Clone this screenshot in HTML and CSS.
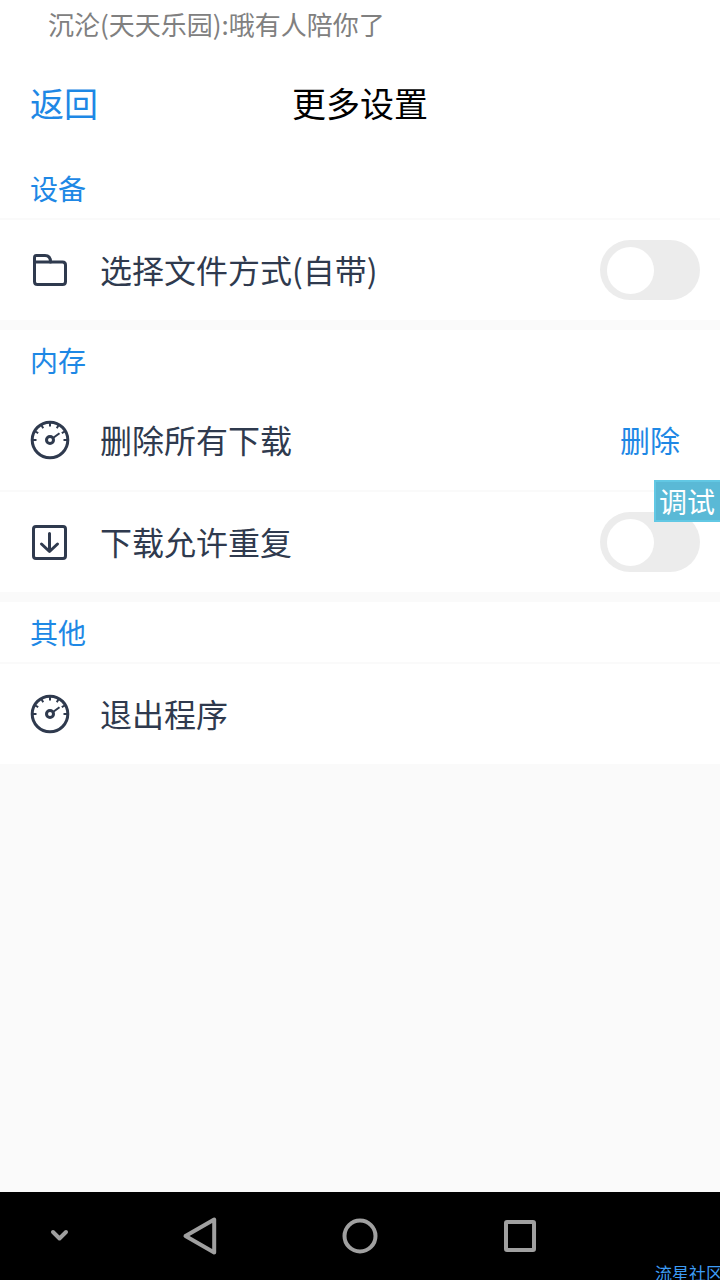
FILE: index.html
```html
<!DOCTYPE html>
<html lang="zh-CN">
<head>
  <meta charset="UTF-8" />
  <meta name="viewport" content="width=device-width, initial-scale=1.0"/>
  <title>更多设置</title>
  <link rel="stylesheet" href="styles.css">
</head>
<body>
  <div class="status-bar">沉沦(天天乐园):哦有人陪你了</div>

  <header class="header">
    <a class="back">返回</a>
    <h1>更多设置</h1>
  </header>

  <main>
    <section class="group">
      <h2 class="line">设备</h2>
      <div class="row">
        <svg class="icon" viewBox="0 0 40 40">
          <path d="M4.500 14.500V8Q4.500 5.500 6 5.500H15Q20.500 5.500 20.500 12"/>
          <path d="M4.500 12H32.500Q35.500 12 35.500 15V31.500Q35.500 34.500 32.500 34.500H7.500Q4.500 34.500 4.500 31.500Z"/>
        </svg>
        <span class="label">选择文件方式(自带)</span>
        <span class="switch"></span>
      </div>
    </section>

    <section class="group">
      <h2>内存</h2>
      <div class="row">
        <svg class="icon" viewBox="0 0 40 40">
          <circle cx="20" cy="20" r="17.800"/>
          <circle cx="20" cy="20" r="3.500"/>
          <path class="thin" d="M23 18L29.500 13.200M20 3V6.500M3 20H6.500M33.500 20H37M5.300 11.500L8.200 13.200M34.700 11.500L31.800 13.200M11.500 5.300L13.200 8.200M28.500 5.300L26.800 8.200"/>
        </svg>
        <span class="label">删除所有下载</span>
        <a class="action">删除</a>
      </div>
      <div class="row line-top">
        <svg class="icon" viewBox="0 0 40 40">
          <rect x="3.500" y="4.500" width="32" height="32" rx="2.500"/>
          <path d="M19.500 11.500V29M11.500 22L19.500 29.500L27.500 22"/>
        </svg>
        <span class="label">下载允许重复</span>
        <span class="switch"></span>
        <span class="debug">调试</span>
      </div>
    </section>

    <section class="group">
      <h2 class="line">其他</h2>
      <div class="row">
        <svg class="icon" viewBox="0 0 40 40">
          <circle cx="20" cy="20" r="17.800"/>
          <circle cx="20" cy="20" r="3.500"/>
          <path class="thin" d="M23 18L29.500 13.200M20 3V6.500M3 20H6.500M33.500 20H37M5.300 11.500L8.200 13.200M34.700 11.500L31.800 13.200M11.500 5.300L13.200 8.200M28.500 5.300L26.800 8.200"/>
        </svg>
        <span class="label">退出程序</span>
      </div>
    </section>
  </main>

  <nav class="nav-bar">
    <svg viewBox="0 0 40 40"><path d="M13 16L19.500 22.500L26 16"/></svg>
    <svg viewBox="0 0 40 40"><path d="M34.200 3.500V36.500L5.500 20Z"/></svg>
    <svg viewBox="0 0 40 40"><circle cx="20" cy="20" r="15.500"/></svg>
    <svg viewBox="0 0 40 40"><rect x="6" y="6" width="28" height="28" rx="1"/></svg>
    <span class="watermark">流星社区</span>
  </nav>
</body>
</html>
```
FILE: styles.css
```css
* {
  box-sizing: border-box;
}
body {
  font-family: "Noto Sans CJK SC", sans-serif;
  background: #fafafa;
  margin: 0;
  height: 1280px;
  display: flex;
  flex-direction: column;
  overflow: hidden;
}
.status-bar {
  height: 50px;
  padding-left: 48px;
  font-size: 26px;
  line-height: 48px;
  color: #808080;
  background: #fff;
}
.header {
  height: 110px;
  padding: 0 30px;
  display: grid;
  grid-template-columns: 1fr auto 1fr;
  align-items: start;
  background: #fff;
  font-size: 34px;
  line-height: 106px;
}
.header h1 {
  margin: 0;
  font-size: 34px;
  font-weight: 400;
  color: #000;
}
.back, .action {
  color: #1e88e5;
}
main {
  flex: 1;
}
.group {
  margin-bottom: 10px;
  background: #fff;
}
.group h2 {
  margin: 0;
  height: 60px;
  padding-left: 30px;
  font-size: 28px;
  font-weight: 400;
  line-height: 60px;
  color: #1e88e5;
}
.group h2.line {
  height: 62px;
  border-bottom: 2px solid #fafafa;
}
.group:first-child h2 {
  height: 60px;
  line-height: 57px;
}
.row {
  position: relative;
  display: flex;
  align-items: center;
  height: 100px;
  padding: 0 20px 0 30px;
}
.line-top {
  height: 102px;
  border-top: 2px solid #fafafa;
}
.icon {
  width: 40px;
  height: 40px;
  margin-right: 30px;
  fill: none;
  stroke: #2f3a4e;
  stroke-width: 3;
  stroke-linecap: round;
  stroke-linejoin: round;
}
.icon .thin {
  stroke-width: 2;
  stroke-linecap: butt;
}
.label {
  flex: 1;
  padding-bottom: 2px;
  font-size: 32px;
  color: #2f3a4e;
}
.action {
  margin-right: 20px;
  padding-bottom: 2px;
  font-size: 30px;
}
.switch {
  width: 100px;
  height: 60px;
  padding: 7px;
  border-radius: 30px;
  background: #ececec;
}
.switch::before {
  content: "";
  display: block;
  width: 47px;
  height: 47px;
  border-radius: 50%;
  background: #fff;
}
/* floating button, hangs over the row above */
.debug {
  position: absolute;
  top: -12px;
  right: 0;
  width: 66px;
  height: 42px;
  padding-left: 3px;
  border: 2px solid #62c8e4;
  border-right: none;
  background: #5ab9d6;
  color: #fff;
  font-size: 28px;
  line-height: 39px;
  white-space: nowrap;
}
.nav-bar {
  position: relative;
  display: grid;
  grid-template-columns: 140px 160px 160px 40px;
  height: 88px;
  padding: 24px 40px;
  background: #000;
}
.nav-bar svg {
  width: 40px;
  height: 40px;
  fill: none;
  stroke: #a0a0a0;
  stroke-width: 4;
  stroke-linecap: round;
  stroke-linejoin: round;
}
.watermark {
  position: absolute;
  right: -3px;
  bottom: -5px;
  font-size: 17px;
  line-height: 24px;
  color: #3d9cf5;
}
```
